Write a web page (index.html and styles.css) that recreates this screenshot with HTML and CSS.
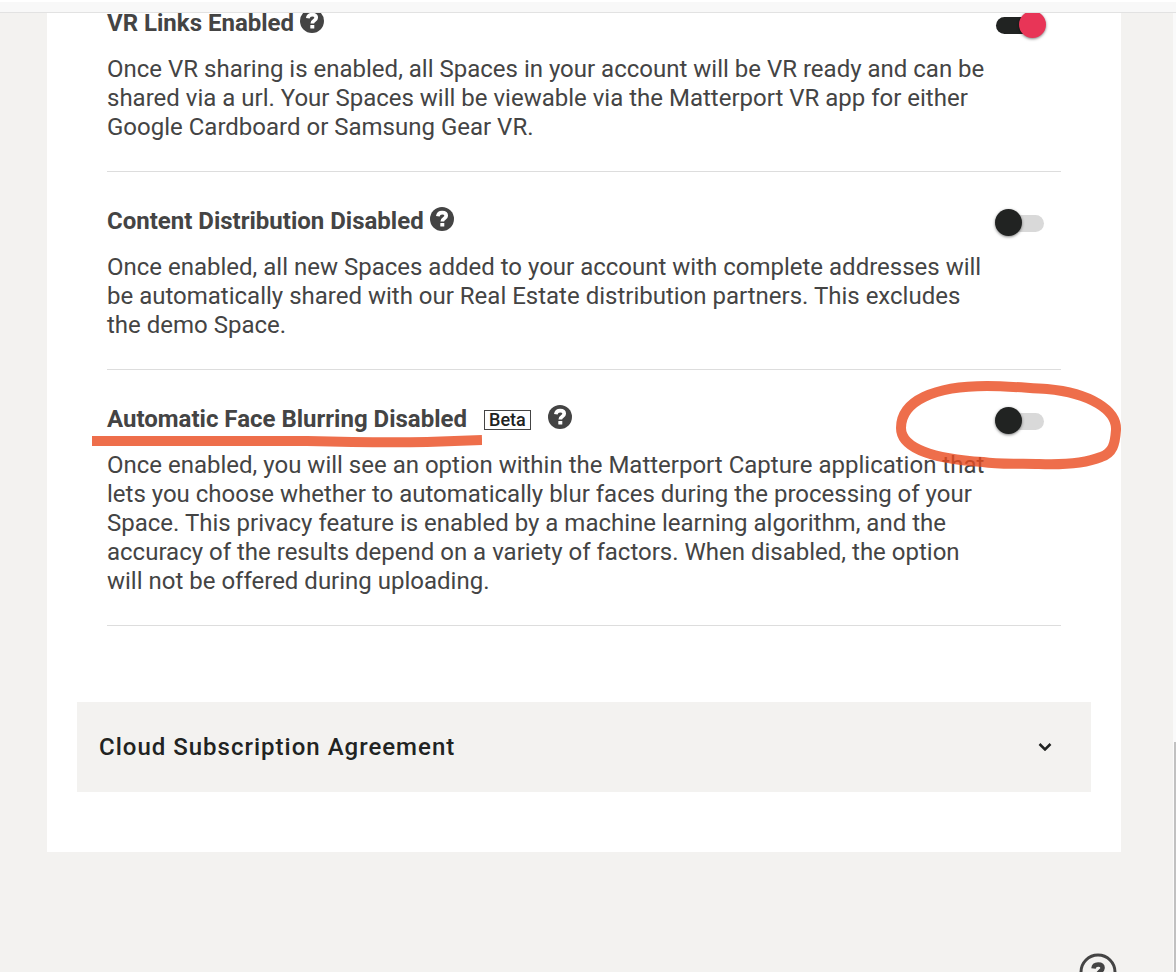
FILE: index.html
```
<!DOCTYPE html>
<html lang="en">
<head>
  <meta charset="UTF-8" />
  <meta name="viewport" content="width=device-width, initial-scale=1.0"/>
  <title>Account Settings</title>
  <link rel="stylesheet" href="styles.css">
</head>
<body>
  <svg class="sprite" aria-hidden="true">
    <symbol id="icon-help" viewBox="0 0 24 24">
      <circle cx="12" cy="12" r="12" fill="#444"/>
      <path d="M7.800 9.200C8.200 6.800 9.800 5.600 12.100 5.600c2.500 0 4.100 1.200 4.100 3.200 0 2.900-3.900 2.600-3.900 5.600" fill="none" stroke="#fff" stroke-width="3.700"/>
      <rect x="10.300" y="15.900" width="4" height="3.700" rx=".5" fill="#fff"/>
    </symbol>
  </svg>

  <header class="topbar"></header>

  <div class="viewport">
    <main class="page">
      <div class="panel">
        <section class="setting">
          <div class="setting-info">
            <div class="setting-title">
              <h2><label for="vr-links">VR Links Enabled</label></h2>
              <button class="help" type="button" aria-label="Help"><svg><use href="#icon-help"/></svg></button>
            </div>
            <p>Once VR sharing is enabled, all Spaces in your account will be VR ready and can be shared via a url. Your Spaces will be viewable via the Matterport VR app for either Google Cardboard or Samsung Gear VR.</p>
          </div>
          <div class="setting-control">
            <input class="toggle" type="checkbox" id="vr-links" checked />
          </div>
        </section>

        <section class="setting">
          <div class="setting-info">
            <div class="setting-title">
              <h2><label for="distribution">Content Distribution Disabled</label></h2>
              <button class="help" type="button" aria-label="Help"><svg><use href="#icon-help"/></svg></button>
            </div>
            <p>Once enabled, all new Spaces added to your account with complete addresses will be automatically shared with our Real Estate distribution partners. This excludes the demo Space.</p>
          </div>
          <div class="setting-control">
            <input class="toggle" type="checkbox" id="distribution" />
          </div>
        </section>

        <section class="setting">
          <div class="setting-info">
            <div class="setting-title with-badge">
              <h2>
                <label for="face-blur">Automatic Face Blurring Disabled</label>
                <svg class="mark-line" viewBox="0 0 390 14" preserveAspectRatio="none" aria-hidden="true">
                  <path d="M0 7H215C250 8 290 9 335 8Q365 7 390 6"/>
                </svg>
              </h2>
              <span class="badge">Beta</span>
              <button class="help" type="button" aria-label="Help"><svg><use href="#icon-help"/></svg></button>
            </div>
            <p>Once enabled, you will see an option within the Matterport Capture application that lets you choose whether to automatically blur faces during the processing of your Space. This privacy feature is enabled by a machine learning algorithm, and the accuracy of the results depend on a variety of factors. When disabled, the option will not be offered during uploading.</p>
          </div>
          <div class="setting-control">
            <input class="toggle" type="checkbox" id="face-blur" />
            <svg class="mark-circle" viewBox="0 0 226 90" aria-hidden="true">
              <path d="M5 47C5 20 38 5 91 5C111 5 131 7 151 8C194 12 221 29 220 49C219 63 217 72 205 76C190 82 169 84 143 83C124 82 104 84 87 81C37 78 5 67 5 47Z"/>
            </svg>
          </div>
        </section>

        <button class="accordion" type="button">
          <span>Cloud Subscription Agreement</span>
          <svg viewBox="0 0 14 8"><path d="M1.500 1L7 6.500L12.500 1"/></svg>
        </button>
      </div>
    </main>
    <div class="scrollbar"><div class="thumb"></div></div>
  </div>

  <button class="support" type="button" aria-label="Support">
    <svg viewBox="0 0 38 38">
      <circle cx="19" cy="19" r="17" fill="none" stroke="#444" stroke-width="3"/>
      <path d="M14.500 15.500C14.700 12.500 16.500 11.500 19.100 11.500c2.700 0 4.500 1.200 4.500 3.500 0 3.300-4.500 3-4.500 7" fill="none" stroke="#444" stroke-width="4.500"/>
      <rect x="17" y="24" width="4" height="4" fill="#444"/>
    </svg>
  </button>
</body>
</html>
```
FILE: styles.css
```
:root {
  --bg: #f3f2f0;
  --text: #444;
  --dark: #212322;
  --accent: #e83557;
  --marker: #ea4b1f;
}

* {
  box-sizing: border-box;
}

body {
  font-family: Roboto, sans-serif;
  font-size: 24px;
  line-height: 29px;
  background: var(--bg);
  color: var(--text);
  margin: 0;
  height: 100vh;
  display: flex;
  flex-direction: column;
  overflow: hidden;
}

h2, p {
  margin: 0;
}

button {
  font: inherit;
  border: none;
  padding: 0;
  background: none;
  cursor: pointer;
}

svg {
  display: block;
}

.sprite {
  position: absolute;
  width: 0;
  height: 0;
}

.topbar {
  flex: none;
  height: 13px;
  background: #f8f8f8;
  border-top: 2px solid #fff;
  border-bottom: 1px solid #e2e2e2;
}

.viewport {
  flex: 1;
  min-height: 0;
  display: flex;
  overflow: hidden;
}

.page {
  flex: 1;
  padding: 0 52px 0 47px;
}

/* the list is scrolled a little past its first title */
.panel {
  margin-top: -39px;
  padding: 0 30px 60px;
  background: #fff;
}

.setting {
  display: flex;
  margin: 0 30px;
  padding: 35px 0 29px;
  border-bottom: 1px solid #ddd;
}

.setting-info {
  flex: 1;
}

.setting-title {
  display: flex;
  align-items: center;
  gap: 6px;
  margin-bottom: 17px;
}

.with-badge {
  gap: 17px;
}

h2 {
  position: relative;
  font-size: 24px;
  font-weight: bold;
}

.badge {
  border: 1px solid #444;
  padding: 0 4px;
  font-size: 18px;
  font-weight: 500;
  line-height: 18px;
  color: var(--dark);
}

.help {
  margin-bottom: 5px;
}

.help svg {
  width: 24px;
  height: 24px;
}

.setting-control {
  position: relative;
  flex: none;
  width: 66px;
  padding-top: 2px;
}

.toggle {
  appearance: none;
  display: block;
  position: relative;
  width: 51px;
  height: 27px;
  margin: 0;
  cursor: pointer;
}

.toggle::before {
  content: "";
  position: absolute;
  top: 6px;
  left: 1px;
  width: 48px;
  height: 17px;
  border-radius: 9px;
  background: #d9d9d9;
}

.toggle::after {
  content: "";
  position: absolute;
  top: 0;
  left: 0;
  width: 27px;
  height: 27px;
  border-radius: 50%;
  background: var(--dark);
  box-shadow: 0 1px 3px rgba(0,0,0,0.5);
}

.toggle:checked::before {
  background: var(--dark);
}

.toggle:checked::after {
  left: 24px;
  background: var(--accent);
}

.mark-line,
.mark-circle {
  position: absolute;
  fill: none;
  stroke: var(--marker);
  stroke-width: 10;
  opacity: 0.8;
  pointer-events: none;
}

.mark-line {
  left: -15px;
  top: 29px;
  width: calc(100% + 30px);
  height: 14px;
}

.mark-circle {
  left: -99px;
  top: -24px;
  width: 226px;
  height: 90px;
}

.accordion {
  display: flex;
  align-items: center;
  justify-content: space-between;
  width: 100%;
  height: 90px;
  margin-top: 76px;
  padding: 0 39px 0 22px;
  background: var(--bg);
  color: var(--dark);
  font-weight: 500;
  letter-spacing: 1px;
}

.accordion svg {
  width: 14px;
  height: 8px;
  fill: none;
  stroke: var(--dark);
  stroke-width: 2.5;
}

.scrollbar {
  flex: none;
  width: 3px;
  background: #fafafa;
}

.thumb {
  height: 100%;
  margin: 729px 0 0 1px;
  background: #c1c1c1;
}

.support {
  position: fixed;
  right: 59px;
  bottom: -19px;
}

.support svg {
  width: 38px;
  height: 38px;
}
```
